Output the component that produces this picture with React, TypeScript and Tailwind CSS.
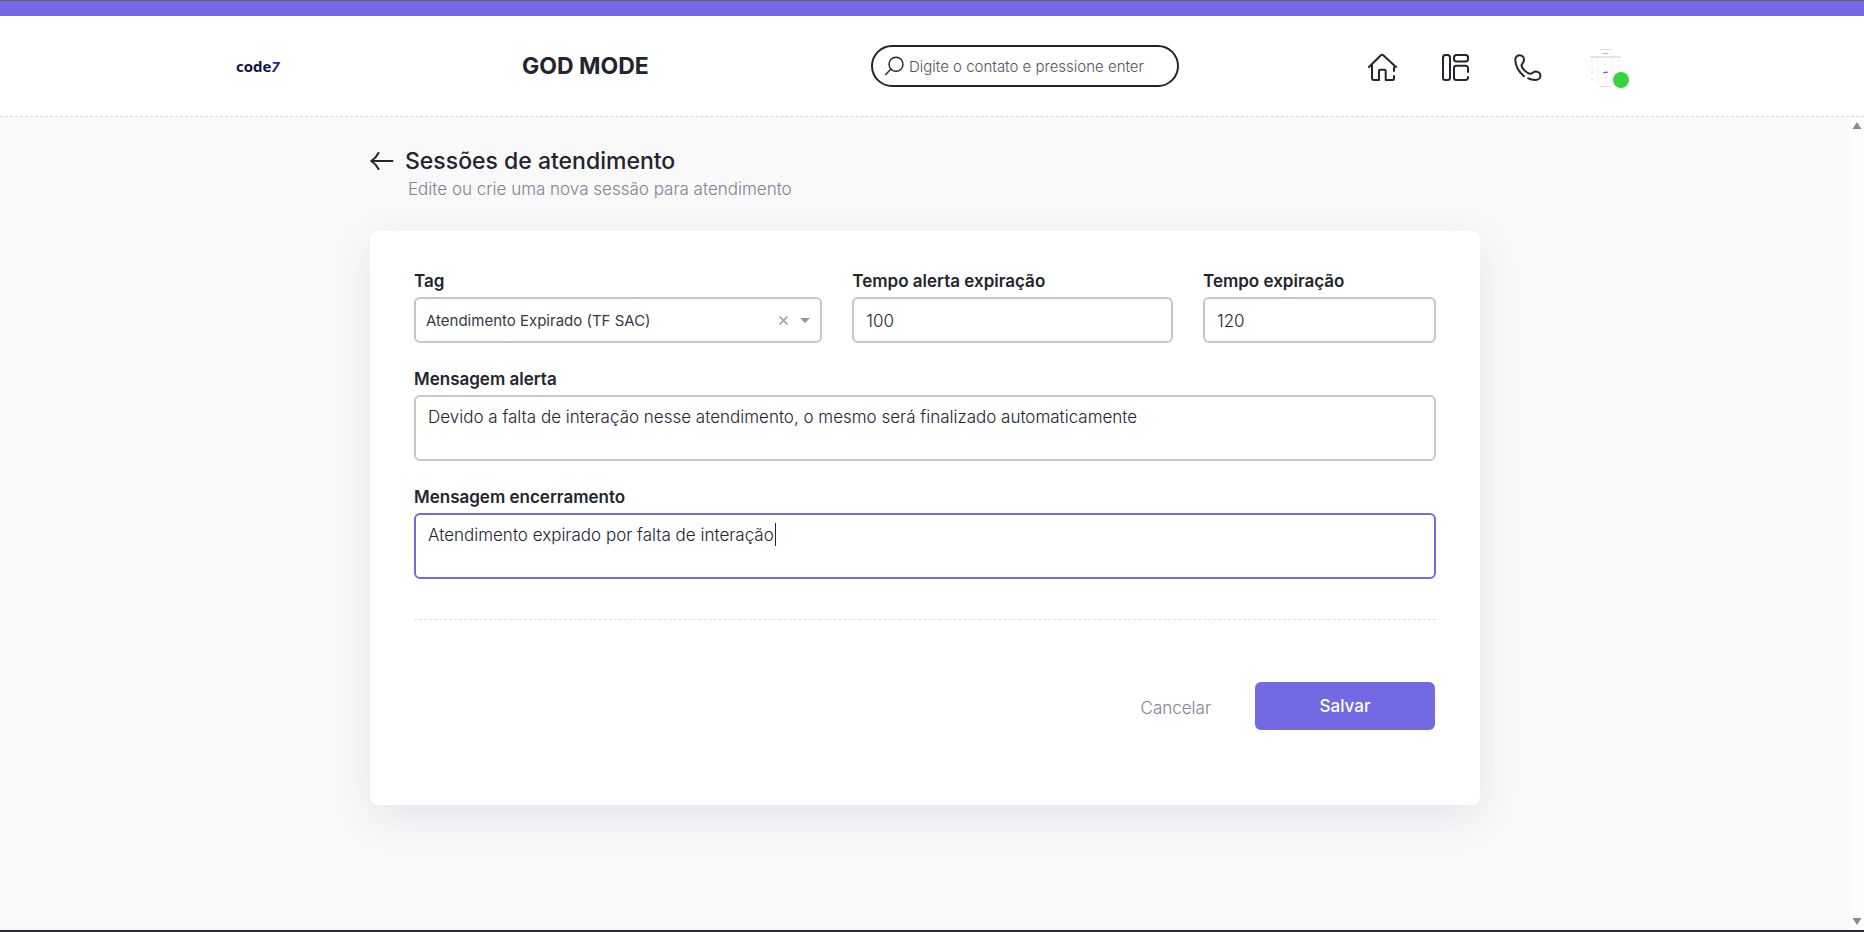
import React, { useState } from 'react';

const labelClass = 'block pt-px text-[17px] leading-6 font-semibold text-[#24252c]';
const fieldClass =
  'block w-full rounded-md border-2 border-[#c7c6ce] bg-white px-3 text-[17px] font-light text-[#24232e] outline-none focus:border-[#726ae3]';

function HomeIcon() {
  return (
    <svg width="30" height="30" viewBox="0 0 30 30" fill="none" stroke="#24232e" strokeWidth="2" strokeLinecap="round" strokeLinejoin="round">
      <path d="M27 18V14.500M29 14 16.300 2.300a1.700 1.700 0 0 0-2.400 0L2 14M5 12V25a2 2 0 0 0 2 2H12V18a1.200 1.200 0 0 1 1.200-1.200H17.500a1.200 1.200 0 0 1 1.200 1.200V27H25.500a1.500 1.500 0 0 0 1.500-1.500V23" />
    </svg>
  );
}

function BoardIcon() {
  return (
    <svg width="30" height="30" viewBox="0 0 30 30" fill="none" stroke="#24232e" strokeWidth="2" strokeLinecap="round" strokeLinejoin="round">
      <rect x="3" y="2" width="7" height="25" rx="2.500" />
      <rect x="14" y="2" width="14" height="6.500" rx="2.500" />
      <path d="M28 19V15a2.300 2.300 0 0 0-2.300-2.300H16.300A2.300 2.300 0 0 0 14 15v9.700a2.300 2.300 0 0 0 2.300 2.300h9.400a2.300 2.300 0 0 0 2.300-2.300V24" />
    </svg>
  );
}

function PhoneIcon() {
  return (
    <svg width="30" height="30" viewBox="0 0 30 30" fill="none" stroke="#24232e" strokeWidth="2" strokeLinecap="round" strokeLinejoin="round">
      <path d="M12 23.200C6.500 18.500 3.300 12.500 3.300 6.500C3.300 4 5.300 2.300 7.800 2.300C10.500 2.300 12 4.500 12 7C12 9.600 9.500 10.500 9.500 12.800C10.100 15.500 14.800 20.300 18 20.800C20.200 20.800 21.200 18.500 23.700 18.500C26.500 18.500 28.400 20.500 28.400 22.800C28.400 25.300 26.200 27 23.700 27C20.700 27 18.300 26.500 16.200 25.400" />
    </svg>
  );
}

function SearchIcon() {
  return (
    <svg width="20" height="20" viewBox="0 0 20 20" fill="none" stroke="#24232e" strokeWidth="1.4" strokeLinecap="round">
      <circle cx="11" cy="8.200" r="7" />
      <path d="M6 13 .7 18.500" />
    </svg>
  );
}

function Avatar() {
  const dots = [13, 19, 25, 31];
  return (
    <svg width="40" height="40" viewBox="0 0 40 40" fill="none">
      <path d="M15 1.500H26M15 38.500H26" stroke="#dcdcdf" />
      <path d="M17.500 5.500H23" stroke="#b4b4b9" />
      <path d="M5 9H36" stroke="#dcdcde" strokeWidth="1.500" />
      <path d="M13 10V37M27 10V37M2 22H12" stroke="#f1f1f3" />
      {dots.map((y) => (
        <g key={y} fill="#cfcfd3">
          <circle cx="7" cy={y} r="0.700" />
          <circle cx="20.500" cy={y + 4} r="0.700" />
          <circle cx="34" cy={y} r="0.700" />
        </g>
      ))}
      <path d="M18 25 23 24" stroke="#5a5a94" strokeWidth="1.200" />
    </svg>
  );
}

function Header() {
  return (
    <header className="border-b border-dashed border-[#d6d6da] bg-white">
      <div className="h-px bg-[#666]" />
      <div className="h-[15px] bg-[#726ae3]" />
      <div className="mx-auto grid h-[100px] w-3/4 grid-cols-[289fr_349fr_494fr_266fr] items-center">
        <a href="#" className="pl-[3px] font-['Open_Sans',sans-serif] text-[15px] leading-5 font-bold text-[#14104a]">
          code<span className="text-[#29298c] italic">7</span>
        </a>
        <h1 className="text-[23px] leading-7 font-bold">GOD MODE</h1>
        <label className="flex h-[42px] w-[308px] items-center gap-1 rounded-full border-2 border-[#24232e] pr-4 pl-3">
          <SearchIcon />
          <input
            type="text"
            aria-label="Buscar contato"
            placeholder="Digite o contato e pressione enter"
            className="min-w-0 flex-1 bg-transparent pt-0.5 text-[15px] font-light outline-none placeholder:text-[#4f5660]"
          />
        </label>
        <nav className="flex items-center justify-between pt-1 pl-0.5">
          <a href="#" aria-label="Início"><HomeIcon /></a>
          <a href="#" aria-label="Painel"><BoardIcon /></a>
          <a href="#" aria-label="Telefone"><PhoneIcon /></a>
          <button type="button" aria-label="Perfil" className="relative mr-1.5">
            <Avatar />
            <span className="absolute -right-1 bottom-0 size-4 rounded-full bg-[#38d43f]" />
          </button>
        </nav>
      </div>
    </header>
  );
}

function Scrollbar() {
  return (
    <div className="flex w-3.5 shrink-0 flex-col items-center justify-between bg-[#fcfcfc] py-[5px]">
      <svg width="10" height="7" viewBox="0 0 10 7" fill="#8a8a8a"><path d="M5 0 9.500 7H.5z" /></svg>
      <svg width="10" height="7" viewBox="0 0 10 7" fill="#8a8a8a"><path d="M5 7 9.500 0H.5z" /></svg>
    </div>
  );
}

export default function App() {
  const [tag, setTag] = useState('Atendimento Expirado (TF SAC)');

  return (
    <div className="flex min-h-screen flex-col border-b-2 border-[#26282b] bg-[#f9f9f9] font-['Inter',sans-serif] text-[#24232e]">
      <Header />
      <div className="flex flex-1">
        <main className="min-w-0 flex-1">
          <div className="mx-auto max-w-[1110px] pt-7">
            <div className="flex items-center gap-[11px]">
              <button type="button" aria-label="Voltar">
                <svg width="24" height="20" viewBox="0 0 24 20" fill="none" stroke="#24232e" strokeWidth="2" strokeLinecap="round" strokeLinejoin="round">
                  <path d="M22.500 10H1.500M8.500 2C7 5 4.500 8 1.200 10C4.500 12 7 15 8.500 18" />
                </svg>
              </button>
              <h2 className="text-[23px] leading-8 font-medium">Sessões de atendimento</h2>
            </div>
            <p className="pl-[38px] text-[17px] leading-6 font-light text-[#828093]">Edite ou crie uma nova sessão para atendimento</p>

            <form className="mt-[30px] rounded-lg bg-white px-11 pt-[37px] pb-[75px] shadow-[0_12px_40px_rgba(60,50,120,0.1)]">
              <div className="grid grid-cols-12 gap-x-[30px]">
                <div className="col-span-5">
                  <label htmlFor="tag" className={labelClass}>Tag</label>
                  <div className="relative mt-1">
                    <select
                      id="tag"
                      value={tag}
                      onChange={(e) => setTag(e.target.value)}
                      className="block h-[46px] w-full appearance-none rounded-md border-2 border-[#c7c6ce] bg-white px-2.5 pt-0.5 text-[15px] text-[#3a3943] outline-none"
                    >
                      <option value="">Selecione</option>
                      <option>Atendimento Expirado (TF SAC)</option>
                    </select>
                    <div className="pointer-events-none absolute inset-y-0 right-3 flex items-center gap-3">
                      <button type="button" aria-label="Limpar" onClick={() => setTag('')} className="pointer-events-auto">
                        <svg width="9" height="9" viewBox="0 0 9 9" stroke="#999" strokeWidth="1.500"><path d="M.5.5 8.500 8.500M8.500.5.5 8.500" /></svg>
                      </button>
                      <svg width="10" height="5" viewBox="0 0 10 5" fill="#999"><path d="M0 0H10L5 5z" /></svg>
                    </div>
                  </div>
                </div>
                <div className="col-span-4">
                  <label htmlFor="alertTime" className={labelClass}>Tempo alerta expiração</label>
                  <input id="alertTime" type="text" defaultValue="100" className={`${fieldClass} mt-1 h-[46px] pt-0.5`} />
                </div>
                <div className="col-span-3">
                  <label htmlFor="expireTime" className={labelClass}>Tempo expiração</label>
                  <input id="expireTime" type="text" defaultValue="120" className={`${fieldClass} mt-1 h-[46px] pt-0.5`} />
                </div>
              </div>

              <div className="mt-[23px]">
                <label htmlFor="alertMessage" className={labelClass}>Mensagem alerta</label>
                <textarea
                  id="alertMessage"
                  defaultValue="Devido a falta de interação nesse atendimento, o mesmo será finalizado automaticamente"
                  className={`${fieldClass} mt-1 h-[66px] resize-none py-2 leading-6`}
                />
              </div>

              <div className="mt-[23px]">
                <label htmlFor="closeMessage" className={labelClass}>Mensagem encerramento</label>
                <div className="relative mt-1">
                  <textarea
                    id="closeMessage"
                    autoFocus
                    defaultValue="Atendimento expirado por falta de interação"
                    className={`${fieldClass} h-[66px] resize-none py-2 leading-6 caret-transparent`}
                  />
                  {/* text cursor */}
                  <span className="pointer-events-none absolute top-2.5 left-[361px] h-[23px] w-px bg-[#24232e]" />
                </div>
              </div>

              <hr className="mt-10 border-t border-dashed border-[#dedee2]" />

              <div className="mt-[62px] flex items-center justify-end gap-11 pr-px">
                <button type="button" className="pt-1 text-[17px] leading-6 font-light text-[#828093]">Cancelar</button>
                <button type="submit" className="h-12 w-[180px] rounded-md bg-[#726ae3] pt-0.5 text-[17px] font-medium text-white">Salvar</button>
              </div>
            </form>
          </div>
        </main>
        <Scrollbar />
      </div>
    </div>
  );
}
